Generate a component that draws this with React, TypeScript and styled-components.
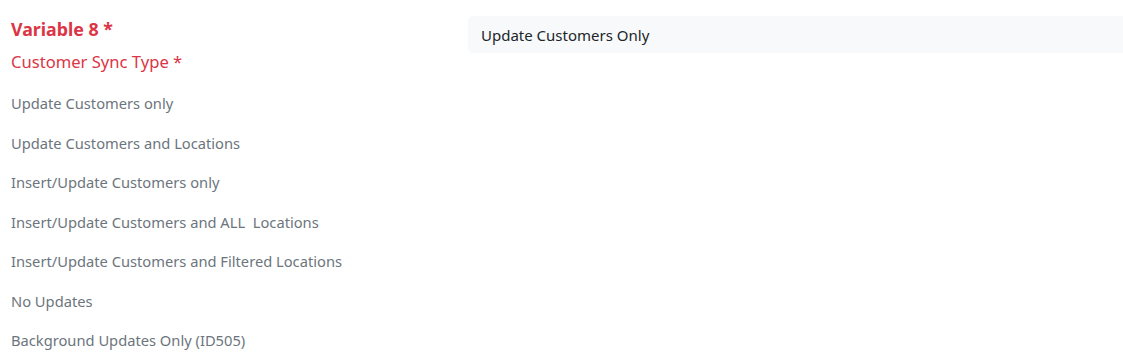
import React from "react";
import styled, { createGlobalStyle } from "styled-components";

const Global = createGlobalStyle`
  html, body { margin: 0; padding: 0; background: #ffffff; overflow: hidden; }
  body { font-family: "Noto Sans", "Open Sans", "Liberation Sans", sans-serif; }
`;

const Page = styled.div`
  display: flex;
  align-items: flex-start;
  padding: 16px 0 0 11px;
`;

const LeftColumn = styled.div`
  width: 457px;
  flex-shrink: 0;
  display: flex;
  flex-direction: column;
`;

const Title = styled.div`
  font-size: 17.8px;
  font-weight: 700;
  color: #dc3545;
  line-height: 26px;
`;

const Subtitle = styled.div`
  font-size: 16.6px;
  color: #dc3545;
  line-height: 24px;
  margin-top: 8px;
`;

const OptionList = styled.div`
  display: flex;
  flex-direction: column;
  margin-top: 10px;
`;

const Option = styled.div`
  font-size: 14.7px;
  color: #6c757d;
  line-height: 39.5px;
  white-space: pre;
`;

const ValueBox = styled.div`
  flex: 1;
  margin-right: -12px;
  background: #f8f9fa;
  border-radius: 5px;
  height: 37px;
  display: flex;
  align-items: center;
  padding-left: 13px;
  font-size: 15px;
  color: #212529;
`;

const options = [
  "Update Customers only",
  "Update Customers and Locations",
  "Insert/Update Customers only",
  "Insert/Update Customers and ALL  Locations",
  "Insert/Update Customers and Filtered Locations",
  "No Updates",
  "Background Updates Only (ID505)",
];

export default function App() {
  return (
    <>
      <Global />
      <Page>
        <LeftColumn>
          <Title>Variable 8 *</Title>
          <Subtitle>Customer Sync Type *</Subtitle>
          <OptionList>
            {options.map((o) => (
              <Option key={o}>{o}</Option>
            ))}
          </OptionList>
        </LeftColumn>
        <ValueBox>Update Customers Only</ValueBox>
      </Page>
    </>
  );
}
